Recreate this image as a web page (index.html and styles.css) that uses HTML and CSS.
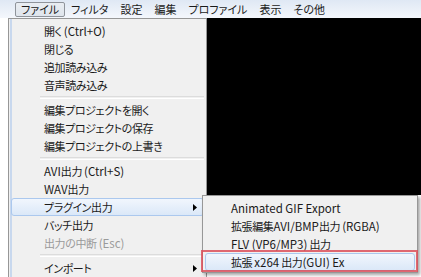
FILE: index.html
```html
<!DOCTYPE html>
<html lang="ja">
<head>
<meta charset="utf-8">
<title>AviUtl</title>
<link rel="stylesheet" href="styles.css">
</head>
<body>
<div class="window">
  <div class="menubar">
    <span class="mb-item pressed">ファイル</span>
    <span class="mb-item">フィルタ</span>
    <span class="mb-item">設定</span>
    <span class="mb-item">編集</span>
    <span class="mb-item">プロファイル</span>
    <span class="mb-item">表示</span>
    <span class="mb-item">その他</span>
  </div>
  <div class="client">
    <div class="preview"></div>
  </div>

  <div class="menu main-menu">
    <div class="item">開く <span class="en">(Ctrl+O)</span></div>
    <div class="item">閉じる</div>
    <div class="item">追加読み込み</div>
    <div class="item">音声読み込み</div>
    <div class="sep"></div>
    <div class="item">編集プロジェクトを開く</div>
    <div class="item">編集プロジェクトの保存</div>
    <div class="item">編集プロジェクトの上書き</div>
    <div class="sep"></div>
    <div class="item"><span class="en">AVI</span>出力 <span class="en">(Ctrl+S)</span></div>
    <div class="item"><span class="en">WAV</span>出力</div>
    <div class="item hot has-sub">プラグイン出力<svg class="arrow" width="4" height="7" viewBox="0 0 4 7"><polygon points="0,0 4,3.5 0,7" fill="#000"/></svg></div>
    <div class="item">バッチ出力</div>
    <div class="item disabled">出力の中断 <span class="en">(Esc)</span></div>
    <div class="sep"></div>
    <div class="item has-sub">インポート<svg class="arrow" width="4" height="7" viewBox="0 0 4 7"><polygon points="0,0 4,3.5 0,7" fill="#000"/></svg></div>
  </div>

  <div class="menu sub-menu">
    <div class="item"><span class="en">Animated GIF Export</span></div>
    <div class="item">拡張編集<span class="en">AVI/BMP</span>出力 <span class="en">(RGBA)</span></div>
    <div class="item"><span class="en">FLV (VP6/MP3)</span> 出力</div>
    <div class="item hot">拡張 <span class="en">x264</span> 出力<span class="en">(GUI) Ex</span></div>
  </div>

  <div class="mark"></div>
</div>
</body>
</html>
```

FILE: styles.css
```css
html, body {
  margin: 0;
  padding: 0;
}
body {
  width: 421px;
  height: 277px;
  overflow: hidden;
  background: #ffffff;
  font-family: "Noto Sans CJK JP", "Noto Sans", sans-serif;
  font-size: 11px;
  letter-spacing: -0.4px;
  font-feature-settings: "palt";
  color: #1a1a1a;
}
.en {
  font-size: 11.5px;
  letter-spacing: 0;
}
.window {
  position: relative;
  width: 421px;
  height: 277px;
}
.menubar {
  height: 18px;
  display: flex;
  align-items: center;
  padding-left: 15px;
  background: linear-gradient(#dfe8f4, #f4f7fc);
  box-sizing: border-box;
  letter-spacing: 0;
}
.mb-item {
  height: 15px;
  line-height: 13px;
  padding: 0 5px;
  box-sizing: border-box;
  border: 1px solid transparent;
  white-space: nowrap;
}
.mb-item.pressed {
  border-color: #8f949b;
  border-radius: 2px;
  background: linear-gradient(#e9edf2, #dfe5ec);
}
.client {
  display: flex;
  justify-content: flex-end;
}
.preview {
  width: 300px;
  height: 177px;
  background: #000;
}
.menu {
  position: absolute;
  box-sizing: border-box;
  background: #f0f0f0;
  border: 1px solid #979797;
  padding: 3px 2px 2px 2px;
}
.main-menu {
  left: 8px;
  top: 18px;
  width: 199px;
  height: 262px;
  background: linear-gradient(to right, #f0f0f0 0 1px, #c8d8ee 1px 3px, #f0f0f0 3px);
}
.item {
  position: relative;
  height: 18px;
  line-height: 16px;
  padding-left: 32px;
  box-sizing: border-box;
  white-space: nowrap;
  border: 1px solid transparent;
  border-radius: 3px;
}
.item.hot {
  border-color: #abc8ee;
  background: linear-gradient(#f1f6fd, #dbe8f8);
}
.item.disabled {
  color: #9a9a9a;
}
.arrow {
  position: absolute;
  right: 6px;
  top: 5px;
}
.sep {
  height: 1px;
  margin: 2px 0 2px 29px;
  border-top: 1px solid #dcdcdc;
  border-bottom: 1px solid #ffffff;
}
.sub-menu {
  left: 202px;
  top: 195px;
  width: 216px;
  height: 78px;
  box-shadow: 2px 2px 3px rgba(0, 0, 0, 0.35);
}
.sub-menu .item {
  padding-left: 25px;
}
.mark {
  position: absolute;
  left: 201px;
  top: 250px;
  width: 217px;
  height: 22px;
  box-sizing: border-box;
  border: 2px solid rgba(220, 80, 90, 0.85);
}
```
